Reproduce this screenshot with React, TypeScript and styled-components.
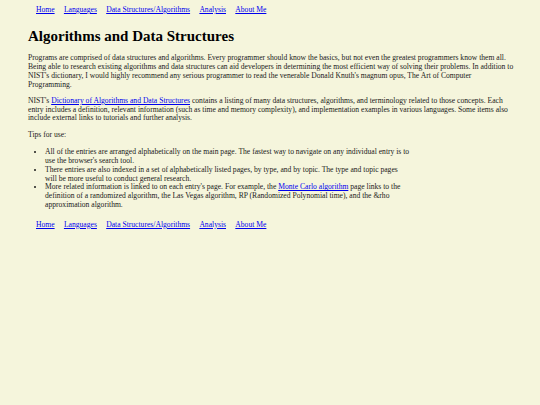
import React from "react";
import styled, { createGlobalStyle } from "styled-components";

const Global = createGlobalStyle`
  html, body { margin: 0; padding: 0; background: #f5f5dc; }
  body { font-family: "Liberation Serif", "Times New Roman", serif; color: #1a1a1a; }
`;

const Page = styled.div`
  padding: 6px 26px 20px 28px;
  font-size: 7.62px;
  line-height: 8.75px;
`;

const Nav = styled.nav`
  display: flex;
  gap: 9.3px;
  padding-left: 8px;
  margin: ${(p: { $bottom?: boolean }) => (p.$bottom ? "11px 0 0 0" : "0")};
`;

const NavLink = styled.a`
  color: #0000ee;
  text-decoration: underline;
`;

const Title = styled.h1`
  font-size: 15px;
  line-height: 17px;
  font-weight: bold;
  color: #000;
  margin: 13px 0 9.5px 0;
`;

const Para = styled.p`
  margin: 0 0 7.6px 0;
`;

const TextLink = styled.a`
  color: #0000ee;
  text-decoration: underline;
`;

const List = styled.ul`
  margin: 9px 0 0 0;
  padding-left: 17px;
  max-width: 365px;
  list-style: disc;
`;

const Item = styled.li`
  margin: 0;
`;

const links = ["Home", "Languages", "Data Structures/Algorithms", "Analysis", "About Me"];

function NavBar({ bottom }: { bottom?: boolean }) {
  return (
    <Nav $bottom={bottom}>
      {links.map((l) => (
        <NavLink key={l} href="#">
          {l}
        </NavLink>
      ))}
    </Nav>
  );
}

export default function App() {
  return (
    <>
      <Global />
      <Page>
        <NavBar />
        <Title>Algorithms and Data Structures</Title>
        <Para>
          Programs are comprised of data structures and algorithms. Every programmer should know the basics, but not
          even the greatest programmers know them all. Being able to research existing algorithms and data structures
          can aid developers in determining the most efficient way of solving their problems. In addition to NIST's
          dictionary, I would highly recommend any serious programmer to read the venerable Donald Knuth's magnum opus,
          The Art of Computer Programming.
        </Para>
        <Para>
          NIST's <TextLink href="#">Dictionary of Algorithms and Data Structures</TextLink> contains a listing of many
          data structures, algorithms, and terminology related to those concepts. Each entry includes a definition,
          relevant information (such as time and memory complexity), and implementation examples in various languages.
          Some items also include external links to tutorials and further analysis.
        </Para>
        <Para>Tips for use:</Para>
        <List>
          <Item>
            All of the entries are arranged alphabetically on the main page. The fastest way to navigate on any
            individual entry is to use the browser's search tool.
          </Item>
          <Item>
            There entries are also indexed in a set of alphabetically listed pages, by type, and by topic. The type and
            topic pages will be more useful to conduct general research.
          </Item>
          <Item>
            More related information is linked to on each entry's page. For example, the{" "}
            <TextLink href="#">Monte Carlo algorithm</TextLink> page links to the definition of a randomized algorithm,
            the Las Vegas algorithm, RP (Randomized Polynomial time), and the &amp;rho approximation algorithm.
          </Item>
        </List>
        <NavBar bottom />
      </Page>
    </>
  );
}
